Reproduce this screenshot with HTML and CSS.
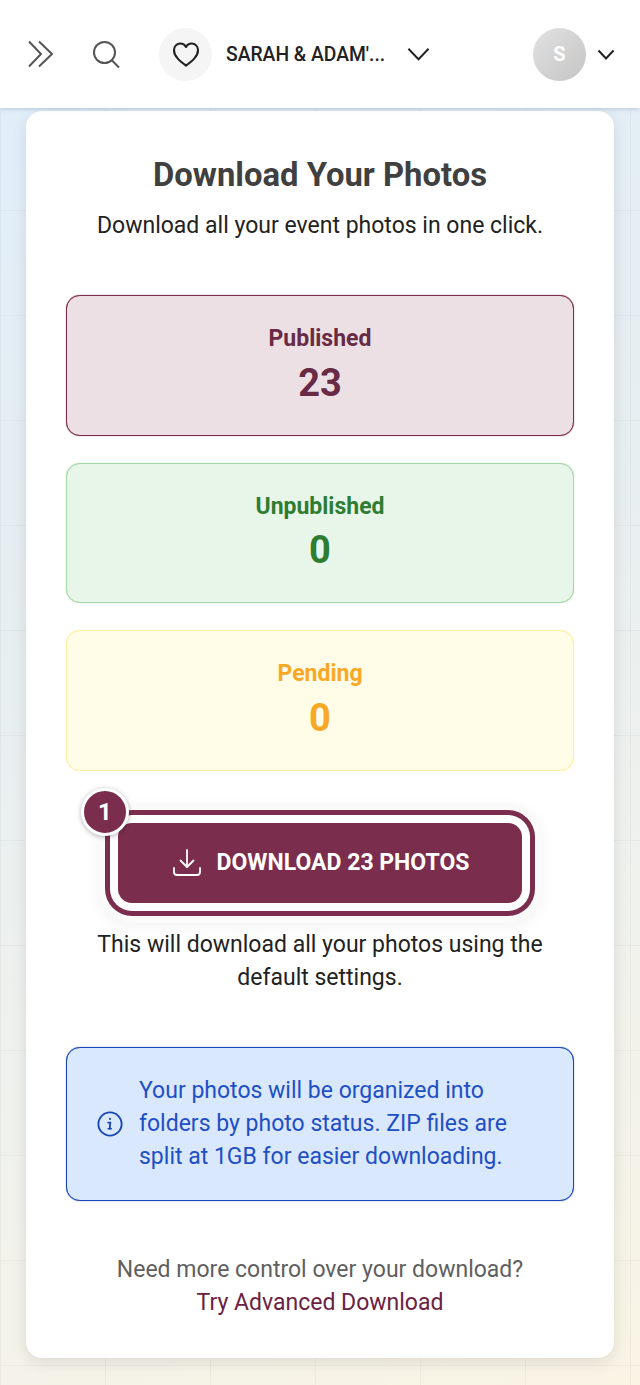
FILE: index.html
```html
<!DOCTYPE html>
<html lang="en">
<head>
  <meta charset="UTF-8">
  <title>Download Your Photos</title>
  <link rel="stylesheet" href="styles.css">
</head>
<body>
  <header class="topbar">
    <button class="icon-btn expand-btn" aria-label="Expand">
      <svg width="28" height="28" viewBox="0 0 28 28" fill="none" stroke="#555" stroke-width="2"><path d="M2 1.500 14 14 2 26.500"/><path d="M12 1.500 25 14 12 26.500"/></svg>
    </button>
    <button class="icon-btn search-btn" aria-label="Search">
      <svg width="27" height="27" viewBox="0 0 27 27" fill="none" stroke="#555" stroke-width="2"><circle cx="11.500" cy="11.500" r="10.500"/><path d="m18.500 19 7.500 7.500"/></svg>
    </button>
    <div class="event-pick">
      <span class="heart-wrap">
        <svg width="28" height="25" viewBox="0 0 28 26" fill="none" stroke="#222" stroke-width="2.200" stroke-linejoin="round"><path d="M14 24.500C8 20 1.500 15 1.500 8.500 1.500 4.500 4.500 1.500 8 1.500c2.600 0 4.800 1.300 6 3.700 1.200-2.400 3.400-3.700 6-3.700 3.500 0 6.500 3 6.500 7 0 6.500-6.500 11.500-12.500 16Z"/></svg>
      </span>
      <span class="event-name">SARAH &amp; ADAM'...</span>
      <svg class="event-chevron" width="23" height="14" viewBox="0 0 24 14" fill="none" stroke="#222" stroke-width="2"><path d="m1.500 1.500 10.500 11 10.500-11"/></svg>
    </div>
    <div class="user-pick">
      <span class="avatar">S</span>
      <svg width="18" height="11" viewBox="0 0 18 11" fill="none" stroke="#222" stroke-width="2"><path d="m1.500 1.500 7.500 8 7.500-8"/></svg>
    </div>
  </header>

  <main class="card">
    <h1 class="card-title">Download Your Photos</h1>
    <p class="card-sub">Download all your event photos in one click.</p>

    <div class="stats">
      <div class="stat stat-published">
        <div class="stat-label">Published</div>
        <div class="stat-value">23</div>
      </div>
      <div class="stat stat-unpublished">
        <div class="stat-label">Unpublished</div>
        <div class="stat-value">0</div>
      </div>
      <div class="stat stat-pending">
        <div class="stat-label">Pending</div>
        <div class="stat-value">0</div>
      </div>
    </div>

    <div class="download-wrap">
      <span class="step-badge">1</span>
      <button class="download-btn">
        <svg width="28" height="27" viewBox="0 0 28 27" fill="none" stroke="#fff" stroke-width="1.800" stroke-linecap="round" stroke-linejoin="round"><path d="M14 1v17"/><path d="m7.500 11.500 6.500 6.500 6.500-6.500"/><path d="M1 19v4a3 3 0 0 0 3 3h20a3 3 0 0 0 3-3v-4"/></svg>
        DOWNLOAD 23 PHOTOS
      </button>
    </div>
    <p class="download-note">This will download all your photos using the default settings.</p>

    <div class="info-box">
      <svg class="info-icon" width="26" height="26" viewBox="0 0 28 28" fill="none" stroke="#1a47b8" stroke-width="2"><circle cx="14" cy="14" r="12.500"/><path d="M12 12.500h2.300l-.6 6.500" stroke-linecap="round"/><path d="M12 19.200h3.400" stroke-width="1.600" stroke-linecap="round"/><circle cx="14" cy="8.500" r="1.100" fill="#1a47b8" stroke="none"/></svg>
      <p class="info-text">Your photos will be organized into folders by photo status. ZIP files are split at 1GB for easier downloading.</p>
    </div>

    <p class="more-text">Need more control over your download?<br><a class="more-link" href="#">Try Advanced Download</a></p>
  </main>
</body>
</html>
```

FILE: styles.css
```css
* {
  box-sizing: border-box;
}

html, body {
  height: 100%;
}

body {
  margin: 0;
  font-family: Roboto, sans-serif;
  color: #222;
  overflow: hidden;
  background-color: #f2f2ee;
  background-image:
    linear-gradient(to right, rgba(120, 120, 120, 0.07) 1px, transparent 1px),
    linear-gradient(to bottom, rgba(120, 120, 120, 0.07) 1px, transparent 1px),
    linear-gradient(160deg, #e0eefc 0%, #e6eef2 35%, #f1f2ec 75%, #f9f4e4 100%);
  background-size: 105px 105px, 105px 105px, 100% 100%;
  background-position: 0 0, 0 0, 0 0;
}

.topbar {
  position: relative;
  z-index: 2;
  height: 108px;
  display: flex;
  align-items: center;
  padding: 0 25px 0 27px;
  background: #fff;
  box-shadow: 0 1px 4px rgba(110, 130, 150, 0.35);
}

.icon-btn {
  display: flex;
  padding: 0;
  border: none;
  background: none;
}

.search-btn {
  margin-left: 38px;
}

.event-pick {
  display: flex;
  align-items: center;
  margin-left: 39px;
}

.heart-wrap {
  width: 53px;
  height: 53px;
  display: flex;
  align-items: center;
  justify-content: center;
  border-radius: 50%;
  background: #f5f5f5;
}

.event-name {
  margin-left: 14px;
  font-size: 19.300px;
  font-weight: 500;
  color: #222;
  white-space: nowrap;
}

.event-chevron {
  margin-left: 22px;
}

.user-pick {
  display: flex;
  align-items: center;
  gap: 11px;
  margin-left: auto;
}

.avatar {
  width: 53px;
  height: 53px;
  display: flex;
  align-items: center;
  justify-content: center;
  border-radius: 50%;
  background: linear-gradient(135deg, #e2e2e2, #c4c4c4);
  color: #fff;
  font-size: 20px;
  font-weight: 700;
}

.card {
  width: 588px;
  height: 1247px;
  margin: 3px 0 0 26px;
  padding: 42px 40px 0;
  background: #fff;
  border-radius: 16px;
  box-shadow: 0 4px 16px rgba(0, 0, 0, 0.1);
  text-align: center;
}

.card-title {
  margin: 0;
  font-size: 32.800px;
  line-height: 44px;
  font-weight: 700;
  color: #404040;
}

.card-sub {
  margin: 13px 0 0;
  font-size: 23px;
  line-height: 32px;
  color: #222;
}

.stats {
  display: flex;
  flex-direction: column;
  gap: 27px;
  margin-top: 53px;
}

.stat {
  height: 140.500px;
  padding-top: 29px;
  border: 1px solid;
  border-radius: 14px;
}

.stat-label {
  font-size: 23px;
  line-height: 28px;
  font-weight: 700;
}

.stat-value {
  margin-top: 6.500px;
  font-size: 38px;
  line-height: 46px;
  font-weight: 700;
}

.stat-published {
  background: #ece0e4;
  border-color: #7b2d4d;
  box-shadow: 0 0 1px #7b2d4d;
  color: #682a45;
}

.stat-unpublished {
  background: #e8f5e9;
  border-color: #a5d6a7;
  box-shadow: 0 0 1px #a5d6a7;
  color: #2e7d32;
}

.stat-pending {
  background: #fffde7;
  border-color: #fff0a0;
  box-shadow: 0 0 1px #fff0a0;
  color: #f9a825;
}

.download-wrap {
  position: relative;
  margin: 52.500px 52px 0;
}

.download-btn {
  width: 100%;
  height: 80px;
  display: flex;
  align-items: center;
  justify-content: center;
  gap: 16px;
  padding: 0 0 2px 2px;
  border: none;
  border-radius: 14px;
  background: #7b2d4d;
  color: #fff;
  font-family: inherit;
  font-size: 23px;
  font-weight: 700;
  box-shadow: 0 0 0 8px #fff, 0 0 0 13px #7b2d4d, 0 0 0 20px #fafafa, 0 4px 14px 20px rgba(0, 0, 0, 0.05);
}

.step-badge {
  position: absolute;
  z-index: 1;
  left: -37px;
  top: -35px;
  width: 48px;
  height: 48px;
  display: flex;
  align-items: center;
  justify-content: center;
  border: 3px solid #fff;
  border-radius: 50%;
  background: #7b2d4d;
  color: #fff;
  font-size: 24px;
  font-weight: 700;
  box-shadow: 0 1px 5px rgba(0, 0, 0, 0.3);
}

.download-note {
  margin: 24.500px 0 0;
  padding: 0 30px;
  font-size: 23px;
  line-height: 33px;
  color: #222;
}

.info-box {
  display: flex;
  align-items: center;
  gap: 16px;
  height: 154px;
  margin-top: 53.500px;
  padding: 0 24px 2px 30px;
  border: 1px solid #1a47b8;
  border-radius: 14px;
  box-shadow: 0 0 1px #1a47b8;
  background: #d9e8fd;
  text-align: left;
}

.info-icon {
  flex: none;
  margin-top: 2px;
}

.info-text {
  margin: 0;
  font-size: 23px;
  line-height: 33px;
  color: #1f4fc4;
}

.more-text {
  margin: 51.500px 0 0;
  font-size: 23px;
  line-height: 33px;
  color: #5f5f5f;
}

.more-link {
  color: #6b2142;
  text-decoration: none;
}
```
